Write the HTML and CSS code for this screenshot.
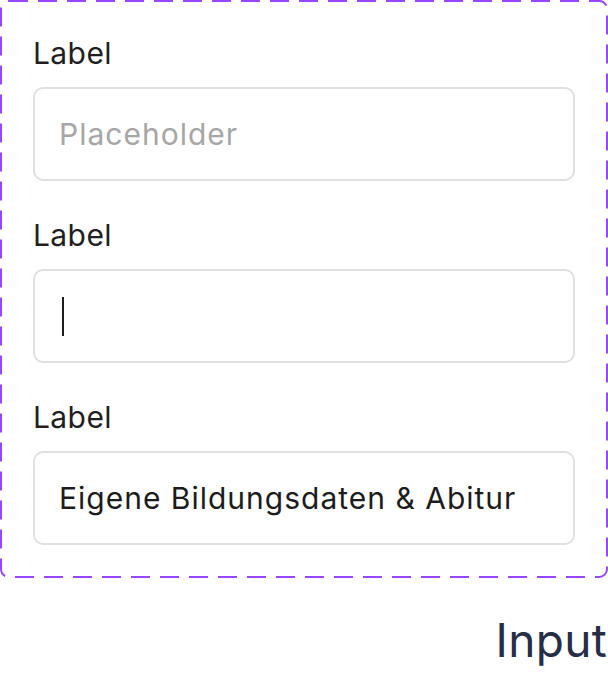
FILE: index.html
```html
<!DOCTYPE html>
<html lang="de">
<head>
<meta charset="utf-8">
<title>Input</title>
<link rel="stylesheet" href="styles.css">
</head>
<body>
<div class="page">
  <div class="set">
    <svg class="set-border" width="100%" height="100%" aria-hidden="true">
      <rect x="1" y="1" width="606" height="576" rx="8" ry="8" fill="none" stroke="#9747FF" stroke-width="2" stroke-dasharray="19 10"/>
    </svg>
    <div class="field">
      <span class="label">Label</span>
      <div class="input"><span class="placeholder">Placeholder</span></div>
    </div>
    <div class="field">
      <span class="label">Label</span>
      <div class="input"><span class="caret"></span></div>
    </div>
    <div class="field">
      <span class="label">Label</span>
      <div class="input"><span class="value">Eigene Bildungsdaten &amp; Abitur</span></div>
    </div>
  </div>
  <div class="title">Input</div>
</div>
</body>
</html>
```

FILE: styles.css
```css
* { box-sizing: border-box; }
html, body { margin: 0; padding: 0; background: #ffffff; }
body { font-family: Inter, "Noto Sans", sans-serif; }

.page {
  width: 608px;
  display: flex;
  flex-direction: column;
}

.set {
  position: relative;
  width: 608px;
  height: 578px;
  padding: 35px 33px 33px 33px;
  display: flex;
  flex-direction: column;
  gap: 36px;
}

.set-border {
  position: absolute;
  left: 0;
  top: 0;
  width: 608px;
  height: 578px;
  pointer-events: none;
}

.field {
  display: flex;
  flex-direction: column;
  gap: 16px;
}

.label {
  font-size: 30px;
  line-height: 36px;
  height: 36px;
  letter-spacing: 0.4px;
  color: #1f1f1f;
}

.input {
  height: 94px;
  border: 2px solid #e0e0e0;
  border-radius: 10px;
  padding: 0 24px;
  display: flex;
  align-items: center;
  font-size: 30px;
  line-height: 36px;
  letter-spacing: 1px;
}

.placeholder { color: #a6a6a6; }
.value { color: #1c1c1c; }

.caret {
  display: block;
  width: 2px;
  height: 39px;
  margin-left: 3px;
  background: #1f1f1f;
}

.title {
  margin-top: 34px;
  align-self: flex-end;
  margin-right: 1px;
  font-size: 46px;
  line-height: 56px;
  letter-spacing: 0.3px;
  color: #262d47;
}
```
